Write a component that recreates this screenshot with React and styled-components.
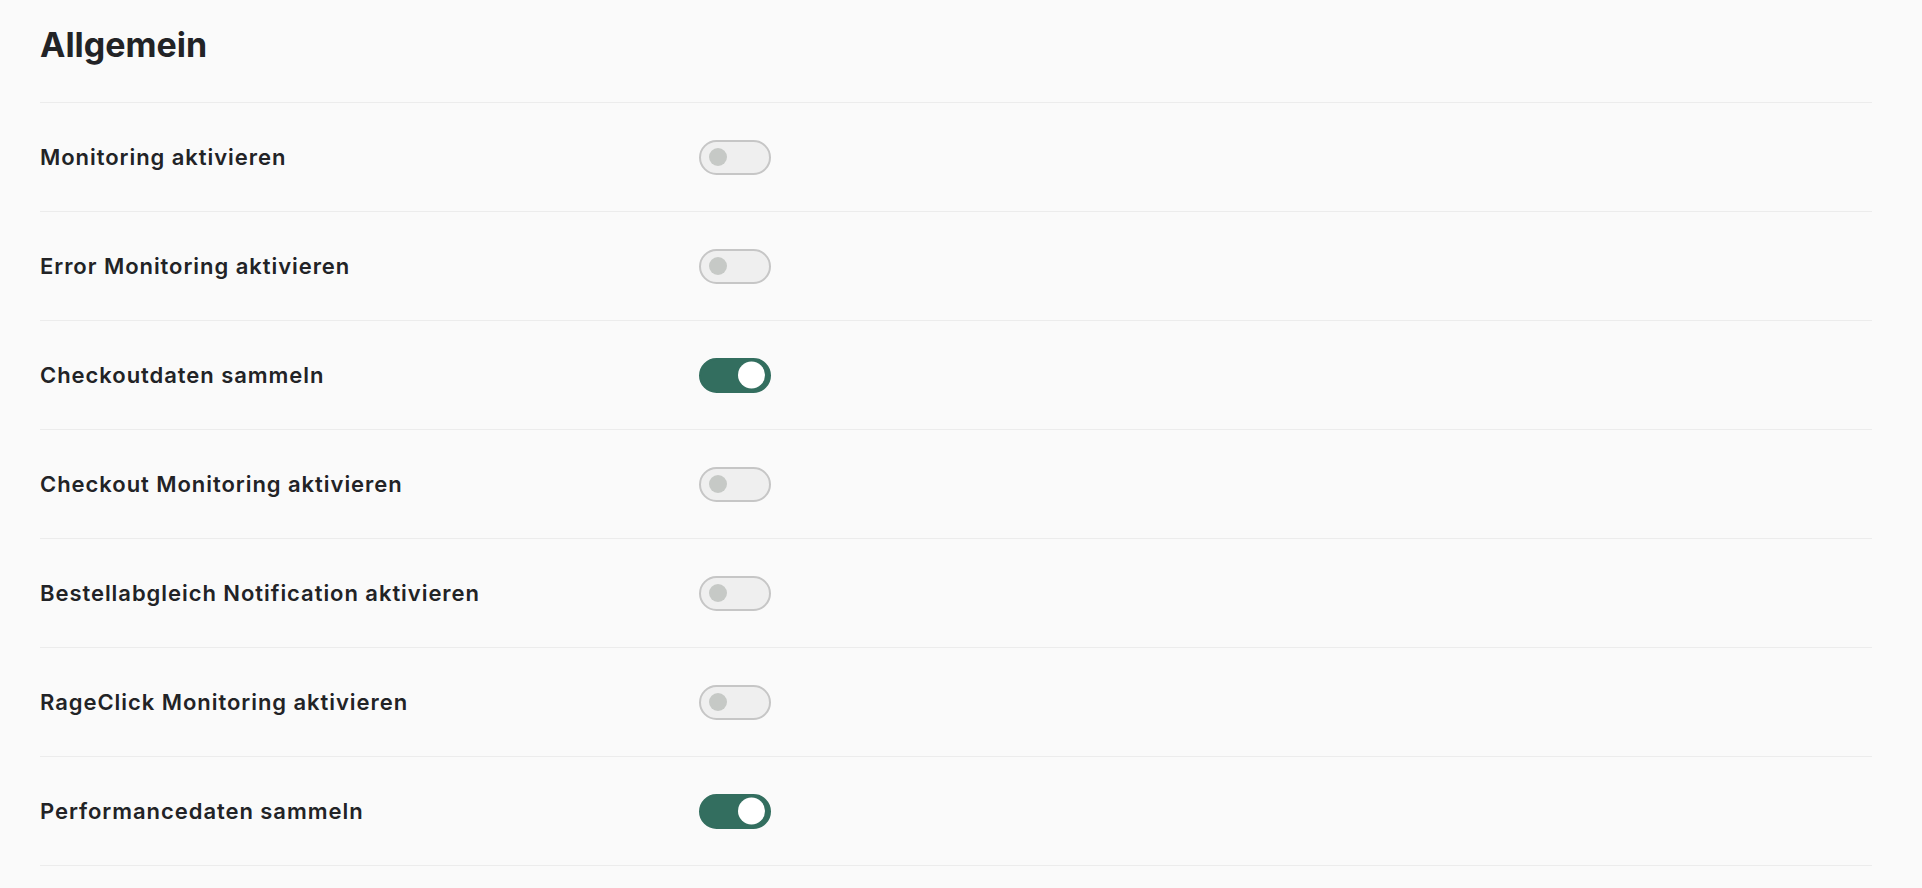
import React, { useState } from "react";
import styled, { createGlobalStyle } from "styled-components";

const Global = createGlobalStyle`
  html, body {
    margin: 0;
    padding: 0;
    background: #fafafa;
  }
  body {
    font-family: Inter, "Noto Sans", sans-serif;
    color: #222326;
  }
`;

const Page = styled.div`
  padding: 25px 50px 0 40px;
`;

const Title = styled.h1`
  margin: 0;
  font-size: 34px;
  line-height: 40px;
  font-weight: 700;
  letter-spacing: 0;
  padding-bottom: 37px;
  border-bottom: 1px solid #ececec;
`;

const Row = styled.div`
  display: flex;
  align-items: center;
  height: 108px;
  border-bottom: 1px solid #ececec;
`;

const Label = styled.div`
  width: 659px;
  font-size: 22px;
  font-weight: 600;
  line-height: 28px;
  letter-spacing: 0.95px;
`;

const Track = styled.button`
  position: relative;
  width: 72px;
  height: 35px;
  padding: 0;
  border-radius: 18px;
  cursor: pointer;
  border: 2.5px solid ${(p) => (p.$on ? "#336e5f" : "#c6c6c6")};
  background: ${(p) => (p.$on ? "#336e5f" : "#efefef")};
`;

const Knob = styled.span`
  position: absolute;
  top: 50%;
  transform: translateY(-50%);
  border-radius: 50%;
  left: ${(p) => (p.$on ? "37px" : "8px")};
  width: ${(p) => (p.$on ? "27px" : "18px")};
  height: ${(p) => (p.$on ? "27px" : "18px")};
  background: ${(p) => (p.$on ? "#ffffff" : "#c6c9c6")};
`;

const settings = [
  ["Monitoring aktivieren", false],
  ["Error Monitoring aktivieren", false],
  ["Checkoutdaten sammeln", true],
  ["Checkout Monitoring aktivieren", false],
  ["Bestellabgleich Notification aktivieren", false],
  ["RageClick Monitoring aktivieren", false],
  ["Performancedaten sammeln", true],
];

function Toggle({ initial }) {
  const [on, setOn] = useState(initial);
  return (
    <Track $on={on} onClick={() => setOn(!on)} aria-pressed={on}>
      <Knob $on={on} />
    </Track>
  );
}

export default function App() {
  return (
    <>
      <Global />
      <Page>
        <Title>Allgemein</Title>
        {settings.map(([label, on]) => (
          <Row key={label}>
            <Label>{label}</Label>
            <Toggle initial={on} />
          </Row>
        ))}
      </Page>
    </>
  );
}
